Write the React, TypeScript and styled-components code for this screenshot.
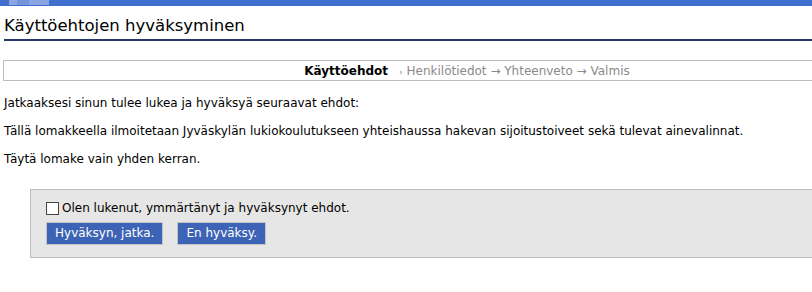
import * as React from "react";
import styled, {createGlobalStyle} from "styled-components";

const Global = createGlobalStyle`
  html, body {
    margin: 0;
    padding: 0;
    background: #fff;
  }
  body {
    font-family: "DejaVu Sans", Verdana, sans-serif;
    font-size: 12px;
    color: #000;
    overflow: hidden;
  }
`;

const Page = styled.div`
  width: 812px;
  height: 292px;
  overflow: hidden;
`;

const TopBar = styled.div`
  height: 6px;
  background: #3f6fcf;
  display: flex;
  padding-left: 9px;
`;

const TopTile = styled.div<{w: number; shade: string}>`
  width: ${({w}) => w}px;
  height: 5px;
  background: ${({shade}) => shade};
`;

const Heading = styled.h1`
  margin: 0 0 0 4px;
  padding: 8px 0 1px;
  font-size: 16.5px;
  font-weight: normal;
  line-height: 24px;
  border-bottom: 2px solid #27396b;
`;

const Steps = styled.div`
  margin: 19px 0 0 3px;
  height: 19px;
  border-top: 1px solid #bdbdbd;
  border-bottom: 1px solid #bdbdbd;
  border-left: 1px solid #bdbdbd;
  display: flex;
  justify-content: center;
  align-items: center;
  gap: 11px;
  padding-left: 118px;
`;

const StepCurrent = styled.span`
  font-weight: bold;
`;

const StepRest = styled.span`
  color: #8a8a8a;
`;

const Arrow = styled.span`
  font-size: 9px;
`;

const Body = styled.div`
  padding: 15px 0 0 4px;
`;

const Para = styled.p`
  margin: 0 0 14px;
  line-height: 14px;
`;

const Box = styled.div`
  margin: 23px 0 0 30px;
  background: #e6e6e6;
  border: 1px solid #c0c0c0;
  border-right: none;
  height: 69px;
  padding: 10px 0 0 15px;
  box-sizing: border-box;
`;

const CheckRow = styled.label`
  display: flex;
  align-items: center;
  gap: 3px;
  height: 16px;
`;

const Check = styled.span`
  width: 11px;
  height: 11px;
  border: 1px solid #444;
  background: #fff;
`;

const Buttons = styled.div`
  display: flex;
  gap: 14px;
  margin-top: 6px;
`;

const Button = styled.button`
  font-family: inherit;
  font-size: 12px;
  color: #fff;
  background: #3c63b5;
  border: 1px solid #c4c4c4;
  padding: 0 8px;
  height: 23px;
  line-height: 21px;
`;

export default function App() {
    return (
        <Page>
            <Global/>
            <TopBar>
                <TopTile w={8} shade="#8aa5e2"/>
                <TopTile w={12} shade="#7394db"/>
                <TopTile w={20} shade="#8aa5e2"/>
            </TopBar>
            <Heading>Käyttöehtojen hyväksyminen</Heading>
            <Steps>
                <StepCurrent>Käyttöehdot</StepCurrent>
                <StepRest><Arrow>›</Arrow> Henkilötiedot → Yhteenveto → Valmis</StepRest>
            </Steps>
            <Body>
                <Para>Jatkaaksesi sinun tulee lukea ja hyväksyä seuraavat ehdot:</Para>
                <Para>Tällä lomakkeella ilmoitetaan Jyväskylän lukiokoulutukseen yhteishaussa hakevan sijoitustoiveet sekä tulevat ainevalinnat.</Para>
                <Para>Täytä lomake vain yhden kerran.</Para>
            </Body>
            <Box>
                <CheckRow>
                    <Check/>
                    Olen lukenut, ymmärtänyt ja hyväksynyt ehdot.
                </CheckRow>
                <Buttons>
                    <Button>Hyväksyn, jatka.</Button>
                    <Button>En hyväksy.</Button>
                </Buttons>
            </Box>
        </Page>
    );
}
